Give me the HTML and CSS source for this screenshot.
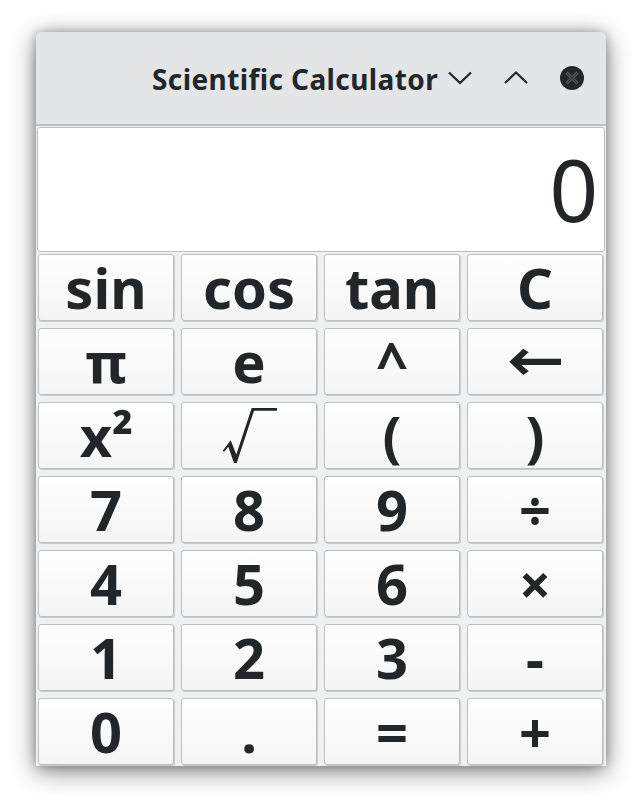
FILE: index.html
```html
<!DOCTYPE html>
<html lang="en">
<head>
<meta charset="utf-8">
<title>Scientific Calculator</title>
<link rel="stylesheet" href="styles.css">
</head>
<body>
<main class="window">
  <header class="titlebar">
    <h1 class="title">Scientific Calculator</h1>
    <div class="controls">
      <svg class="control" viewBox="0 0 24 24"><path d="M1 6.5 12 17 23 6.5"/></svg>
      <svg class="control" viewBox="0 0 24 24"><path d="M1 17 12 6.5 23 17"/></svg>
      <svg class="control" viewBox="0 0 24 24"><circle cx="12" cy="12" r="12"/><path class="cross-edge" d="M6.5 6.5 17.5 17.5M17.5 6.5 6.5 17.5"/><path class="cross-core" d="M6.5 6.5 17.5 17.5M17.5 6.5 6.5 17.5"/></svg>
    </div>
  </header>
  <output class="display">0</output>
  <div class="keys">
    <button class="key">sin</button><button class="key">cos</button><button class="key">tan</button><button class="key">C</button>
    <button class="key">π</button><button class="key">e</button><button class="key">^</button>
    <button class="key" aria-label="Backspace"><svg class="symbol" viewBox="0 0 134 65"><path d="M41.3 32.7 55.3 19.7 60.7 23.3 53.5 29.7H93V36H53.5L60.7 42.3 55.3 46Z"/></svg></button>
    <button class="key power">x²</button>
    <button class="key" aria-label="Square root"><svg class="symbol" viewBox="0 0 134 65"><path d="M40.7 47.7 48.7 37.3 54.3 51.5 69.7 5H95V7.7H72L54.7 60H52L46.3 43.7 42 49Z"/></svg></button>
    <button class="key">(</button><button class="key">)</button>
    <button class="key">7</button><button class="key">8</button><button class="key">9</button><button class="key">÷</button>
    <button class="key">4</button><button class="key">5</button><button class="key">6</button><button class="key">×</button>
    <button class="key">1</button><button class="key">2</button><button class="key">3</button><button class="key">-</button>
    <button class="key">0</button><button class="key">.</button><button class="key">=</button><button class="key">+</button>
  </div>
</main>
</body>
</html>
```
FILE: styles.css
```css
* { box-sizing: border-box; }
body {
  margin: 0;
  padding: 32px 36px 40px;
  background: #fff;
  color: #232629;
  font-family: "Noto Sans", sans-serif;
}
.window {
  width: 570px;
  height: 734px;
  background: #eff0f1;
  border-radius: 6px 6px 0 0;
  box-shadow: 0 5px 24px rgba(0, 0, 0, .5), 0 0 10px rgba(0, 0, 0, .25);
}
.titlebar {
  display: flex;
  align-items: center;
  justify-content: flex-end;
  gap: 10px;
  height: 94px;
  border-bottom: 2px solid #bcbec0;
  padding-right: 22px;
  background: #e3e5e7;
  border-radius: 6px 6px 0 0;
}
.title {
  margin: 2px 0 0;
  width: 286px;
  font-size: 28px;
  line-height: 40px;
  font-weight: 700;
  letter-spacing: .4px;
  white-space: nowrap;
}
.controls { display: flex; gap: 32px; }
.control { width: 24px; height: 24px; fill: none; stroke: #232629; stroke-width: 2.2; }
.control circle { fill: #232629; stroke: none; }
.cross-edge { stroke: #66696c; stroke-width: 3; }
.cross-core { stroke: #303337; stroke-width: 1.4; }
.display {
  display: block;
  height: 125px;
  margin: 1px 1px 2px;
  padding-right: 6px;
  border: 1px solid #bcbec0;
  border-radius: 3px;
  background: #fff;
  font-size: 85px;
  line-height: 123px;
  text-align: right;
}
.keys {
  display: grid;
  grid-template-columns: repeat(4, 136px);
  grid-auto-rows: 67px;
  gap: 7px;
  padding-left: 2px;
}
.key {
  padding: 0;
  border: 1px solid #bcbec0;
  border-radius: 3px;
  background: linear-gradient(#fefefe, #f5f5f5);
  box-shadow: 1px 1px 0 #cbcccd;
  color: inherit;
  font: bold 56px/65px "Noto Sans", "DejaVu Sans", sans-serif;
}
.power { padding-left: 1px; }
.symbol { display: block; width: 134px; height: 65px; fill: #232629; }
```
